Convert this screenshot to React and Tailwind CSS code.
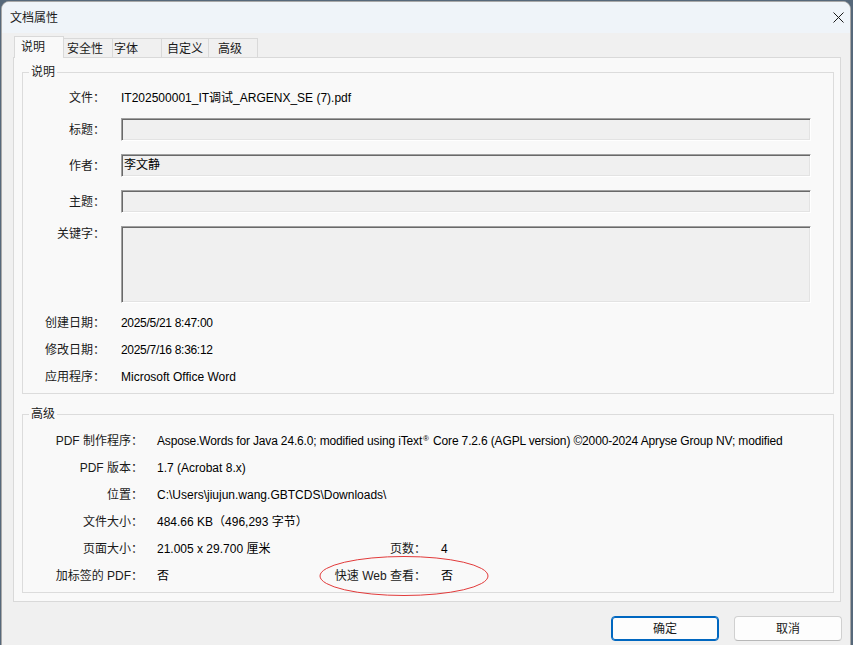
import React from "react";

const font = "font-['Liberation_Sans','Noto_Sans_CJK_SC',sans-serif]";

function Field({ h = "h-[23px]", children }) {
  return (
    <div
      className={`w-[690px] ${h} bg-[#f0f0f0] border border-t-[#a0a0a0] border-l-[#a0a0a0] border-b-white border-r-white shadow-[inset_1px_1px_0_#696969,inset_-1px_-1px_0_#e3e3e3] pl-[2px] pt-[2px] text-black`}
    >
      {children}
    </div>
  );
}

function Row1({ label, children, className = "h-[22px] items-center" }) {
  return (
    <div className={`flex ${className}`}>
      <div className="w-[82px] text-right text-[#1a1a1a]">{label}</div>
      <div className="ml-[16px] text-black">{children}</div>
    </div>
  );
}

function Row2({ label, children, extra }) {
  return (
    <div className="flex h-[27px] items-center">
      <div className="w-[120px] text-right text-[#1a1a1a]">{label}</div>
      <div className="ml-[14px] w-[143px] whitespace-nowrap text-black">{children}</div>
      {extra && (
        <>
          <div className="w-[126px] text-right text-[#1a1a1a]">{extra[0]}</div>
          <div className="ml-[15px] text-black">{extra[1]}</div>
        </>
      )}
    </div>
  );
}

export default function App() {
  return (
    <div className={`relative w-[853px] h-[645px] overflow-hidden bg-[#56687a] pt-[1px] pl-[1px] ${font} text-[12px] leading-[16px]`}>
      <div className="w-[850px] h-[660px] rounded-t-[8px] border border-[#a8a8a8] bg-[#f0f0f0] flex flex-col overflow-hidden">
        {/* title bar */}
        <div className="h-[31px] bg-[#eff4f9] flex items-center justify-between pl-[8px] pr-[6px] shrink-0">
          <span className="text-[#1a1a1a] pt-[1px]">文档属性</span>
          <svg width="11" height="11" viewBox="0 0 11 11">
            <path d="M0.5 0.5 L10.5 10.5 M10.5 0.5 L0.5 10.5" stroke="#1a1a1a" strokeWidth="1" />
          </svg>
        </div>

        {/* tabs */}
        <div className="flex items-end h-[21px] mt-[3px] pl-[12px] shrink-0">
          <div className="relative z-10 -mb-[1px] h-[22px] w-[50px] bg-[#f9f9f9] border border-b-0 border-[#d9d9d9] pl-[6px] pt-[2px] text-[#1a1a1a]">
            说明
          </div>
          <div className="h-[19px] w-[49px] border-t border-r border-[#d9d9d9] pl-[3px] pt-[2px] text-[#1a1a1a]">安全性</div>
          <div className="h-[19px] w-[49px] border-t border-r border-[#d9d9d9] pl-[1px] pt-[2px] text-[#1a1a1a]">字体</div>
          <div className="h-[19px] w-[47px] border-t border-r border-[#d9d9d9] pl-[5px] pt-[2px] text-[#1a1a1a]">自定义</div>
          <div className="h-[19px] w-[49px] border-t border-r border-[#d9d9d9] pl-[9px] pt-[2px] text-[#1a1a1a]">高级</div>
        </div>

        {/* panel */}
        <div className="ml-[11px] w-[828px] h-[545px] shrink-0 border border-[#d9d9d9] bg-[#f9f9f9] pt-[14px] pl-[8px] pr-[6px]">
          {/* group 1 */}
          <div className="relative h-[322px] border border-[#dcdcdc] pt-[14px]">
            <span className="absolute left-[6px] -top-[9px] px-[2px] bg-[#f9f9f9] text-[#1a1a1a]">说明</span>
            <Row1 label="文件：">IT202500001_IT调试_ARGENX_SE (7).pdf</Row1>
            <div className="mt-[9px]">
              <Row1 label="标题：" className="h-[23px] items-center">
                <Field />
              </Row1>
            </div>
            <div className="mt-[13px]">
              <Row1 label="作者：" className="h-[23px] items-center">
                <Field>李文静</Field>
              </Row1>
            </div>
            <div className="mt-[13px]">
              <Row1 label="主题：" className="h-[23px] items-center">
                <Field />
              </Row1>
            </div>
            <div className="mt-[13px]">
              <Row1 label="关键字：" className="h-[77px] items-start">
                <Field h="h-[77px]" />
              </Row1>
            </div>
            <div className="mt-[9px]">
              <Row1 label="创建日期："><span className="tracking-[-0.3px]">2025/5/21 8:47:00</span></Row1>
            </div>
            <div className="mt-[5px]">
              <Row1 label="修改日期："><span className="tracking-[-0.3px]">2025/7/16 8:36:12</span></Row1>
            </div>
            <div className="mt-[5px]">
              <Row1 label="应用程序：">Microsoft Office Word</Row1>
            </div>
          </div>

          {/* group 2 */}
          <div className="relative mt-[20px] h-[179px] border border-[#dcdcdc] pt-[12px]">
            <span className="absolute left-[6px] -top-[9px] px-[2px] bg-[#f9f9f9] text-[#1a1a1a]">高级</span>
            <Row2 label="PDF 制作程序：">
              <span className="tracking-[-0.15px]">
                Aspose.Words for Java 24.6.0; modified using iText<sup className="text-[8px] mx-[1px]">®</sup> Core 7.2.6 (AGPL version) ©2000-2024 Apryse Group NV; modified
              </span>
            </Row2>
            <Row2 label="PDF 版本：">1.7 (Acrobat 8.x)</Row2>
            <Row2 label="位置：">C:\Users\jiujun.wang.GBTCDS\Downloads\</Row2>
            <Row2 label="文件大小：">484.66 KB（496,293 字节）</Row2>
            <Row2 label="页面大小：" extra={["页数：", "4"]}>21.005 x 29.700 厘米</Row2>
            <Row2 label="加标签的 PDF：" extra={["快速 Web 查看：", "否"]}>否</Row2>
          </div>
        </div>

        {/* buttons */}
        <div className="mt-[14px] flex justify-end gap-[15px] pr-[8px] shrink-0">
          <button className="w-[108px] h-[25px] rounded-[4px] border border-[#0067c0] bg-[#fdfdfd] shadow-[inset_0_0_0_1px_#0067c0] text-[#1a1a1a]">
            确定
          </button>
          <button className="w-[108px] h-[25px] rounded-[4px] border border-[#d0d0d0] border-b-[#b8b8b8] bg-[#fdfdfd] text-[#1a1a1a]">
            取消
          </button>
        </div>
      </div>

      {/* red annotation ellipse */}
      <svg className="absolute left-[319px] top-[555px]" width="171" height="42" viewBox="0 0 171 42">
        <ellipse cx="85" cy="21" rx="84" ry="19.5" fill="none" stroke="#e23a3a" strokeWidth="1" />
      </svg>
    </div>
  );
}
